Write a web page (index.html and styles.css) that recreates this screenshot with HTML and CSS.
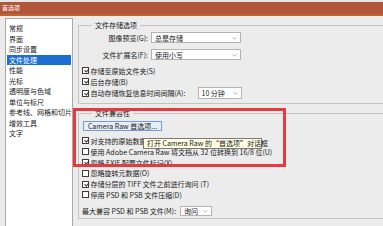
FILE: index.html
```html
<!DOCTYPE html>
<html lang="zh-CN">
<head>
<meta charset="utf-8">
<title>首选项</title>
<link rel="stylesheet" href="styles.css">
</head>
<body>
<div class="window">
  <div class="titlebar">首选项</div>
  <div class="content">
    <ul class="nav">
      <li>常规</li>
      <li>界面</li>
      <li>同步设置</li>
      <li class="active">文件处理</li>
      <li>性能</li>
      <li>光标</li>
      <li>透明度与色域</li>
      <li>单位与标尺</li>
      <li>参考线、网格和切片</li>
      <li>增效工具</li>
      <li>文字</li>
    </ul>
    <div class="main">
      <fieldset class="group g1">
        <legend>文件存储选项</legend>
        <div class="field f1"><span class="lbl">图像预览(G):</span><span class="select w90">总是存储<svg class="chev" viewBox="0 0 6 4"><path d="M0.5 0.5 L3 3 L5.5 0.5"/></svg></span></div>
        <div class="field f2"><span class="lbl">文件扩展名(F):</span><span class="select w90">使用小写<svg class="chev" viewBox="0 0 6 4"><path d="M0.5 0.5 L3 3 L5.5 0.5"/></svg></span></div>
        <div class="cb first"><span class="box on"></span>存储至原始文件夹(S)</div>
        <div class="cb"><span class="box on"></span>后台存储(B)</div>
        <div class="cb tall"><span class="box on"></span><span class="autolbl">自动存储恢复信息时间间隔(A):</span><span class="select w43">10 分钟<svg class="chev" viewBox="0 0 6 4"><path d="M0.5 0.5 L3 3 L5.5 0.5"/></svg></span></div>
      </fieldset>
      <fieldset class="group g2">
        <legend>文件兼容性</legend>
        <div class="btnrow"><span class="btn">Camera Raw 首选项...</span></div>
        <div class="cb r2 first2"><span class="box on"></span>对支持的原始数据文件优先使用 Adobe Camera Raw(R)</div>
        <div class="cb r2"><span class="box"></span>使用 Adobe Camera Raw 将文档从 32 位转换到 16/8 位(U)</div>
        <div class="cb r2"><span class="box on"></span>忽略 EXIF 配置文件标记(X)</div>
        <div class="cb r2"><span class="box"></span>忽略旋转元数据(O)</div>
        <div class="cb r2"><span class="box on"></span>存储分层的 TIFF 文件之前进行询问 (T)</div>
        <div class="cb r2"><span class="box"></span>停用 PSD 和 PSB 文件压缩(D)</div>
        <div class="maxrow"><span>最大兼容 PSD 和 PSB 文件(M):</span><span class="select w31">询问<svg class="chev" viewBox="0 0 6 4"><path d="M0.5 0.5 L3 3 L5.5 0.5"/></svg></span></div>
      </fieldset>
    </div>
    <div class="highlight"></div>
    <div class="tooltip">打开 Camera Raw 的“首选项”对话框</div>
  </div>
</div>
</body>
</html>
```
FILE: styles.css
```css
* { box-sizing: border-box; }
html, body { margin: 0; padding: 0; }
body {
  width: 383px;
  height: 226px;
  overflow: hidden;
  background: #ececec;
  font-family: "Noto Sans CJK SC", "Noto Sans", sans-serif;
  font-size: 7px;
  color: #1b1b1b;
}
.window {
  border-top: 2px solid #e6e6e6;
  height: 226px;
  overflow: hidden;
}
.titlebar {
  height: 14px;
  background: #b1553b;
  border-bottom: 2px solid #c1632f;
  color: #fff;
  font-size: 6px;
  line-height: 11px;
  padding-left: 2px;
}
.content {
  position: relative;
  display: flex;
  height: 210px;
  overflow: hidden;
}
.nav {
  list-style: none;
  margin: 2px 0 0 5px;
  padding: 4px 1px 0 1px;
  width: 68px;
  height: 208px;
  background: #fff;
  border: 1px solid #a9a9a9;
  border-bottom: none;
  flex: none;
}
.nav li {
  height: 10.5px;
  line-height: 10.5px;
  padding-left: 2px;
  white-space: nowrap;
}
.nav li.active {
  background: #1c6fd0;
  color: #fff;
}
.main {
  flex: 1;
  margin-left: 5px;
  padding-top: 4px;
  min-width: 0;
}
.group {
  margin: 0;
  padding: 0 0 0 3px;
  border: 1px solid #c3c3c3;
  border-right: none;
  min-width: 0;
}
.group legend {
  margin-left: 10px;
  padding: 0 3px;
  line-height: 10px;
  height: 10px;
}
.g1 { padding-top: 2px; padding-bottom: 4px; }
.g2 { margin-top: 4px; padding-top: 3px; padding-bottom: 2px; }
.field {
  display: flex;
  align-items: center;
  height: 11px;
}
.f2 { margin-top: 6px; }
.lbl {
  width: 67px;
  text-align: right;
  padding-right: 1px;
  white-space: nowrap;
}
.select {
  position: relative;
  display: flex;
  align-items: center;
  height: 11px;
  margin-left: 2px;
  padding-left: 3px;
  background: #fff;
  border: 1px solid #b3b3b3;
  white-space: nowrap;
}
.w90 { width: 90px; }
.w43 { width: 44px; height: 12px; margin-left: 0; }
.w31 { width: 32px; height: 10px; margin-left: 4px; }
.chev {
  position: absolute;
  right: 3px;
  top: 3.5px;
  width: 5px;
  height: 3px;
  fill: none;
  stroke: #8a8a8a;
  stroke-width: 0.9;
}
.cb {
  display: flex;
  align-items: center;
  height: 11px;
  white-space: nowrap;
}
.cb.first { margin-top: 5px; }
.cb.tall { height: 12px; }
.cb.r2 { height: 10.8px; }
.cb.first2 { margin-top: 4.6px; }
.box {
  flex: none;
  width: 7px;
  height: 7px;
  margin-right: 1.5px;
  background: #fff;
  border: 1px solid #3c3c3c;
  position: relative;
}
.box.on::after {
  content: "";
  position: absolute;
  left: 1.6px;
  top: 0px;
  width: 1.8px;
  height: 3.4px;
  border: solid #222;
  border-width: 0 1px 1px 0;
  transform: rotate(40deg);
}
.autolbl { width: 107px; }
.btnrow { height: 10px; display: flex; }
.btn {
  margin-left: 1px;
  width: 79px;
  height: 10px;
  line-height: 8px;
  text-align: center;
  background: #e6eef8;
  border: 1px solid #6d9fd6;
  white-space: nowrap;
}
.maxrow {
  display: flex;
  align-items: center;
  margin-top: 5.6px;
  height: 10px;
  white-space: nowrap;
}
.highlight {
  position: absolute;
  left: 73px;
  top: 92px;
  width: 213px;
  height: 59px;
  border: 3px solid #e53a3f;
}
.tooltip {
  position: absolute;
  left: 143px;
  top: 122px;
  width: 119px;
  height: 11px;
  line-height: 9px;
  padding-left: 3px;
  background: #ffffe1;
  border: 1px solid #7a7a7a;
  white-space: nowrap;
}
```
